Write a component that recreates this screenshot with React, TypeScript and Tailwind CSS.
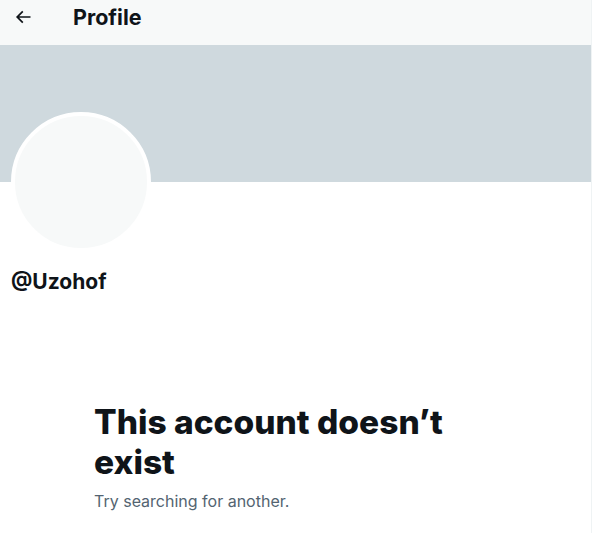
import React from "react";

const BackArrow = () => (
  <svg viewBox="0 0 24 24" className="w-5 h-5 text-[#0f1419]" fill="currentColor">
    <path d="M7.414 13l5.043 5.04-1.414 1.42L3.586 12l7.457-7.46 1.414 1.42L7.414 11H21v2H7.414z" />
  </svg>
);

const App = () => {
  return (
    <div
      className="w-[592px] min-h-[533px] bg-white border-r border-[#eff3f4] text-[#0f1419]"
      style={{ fontFamily: 'Inter, "Noto Sans", Roboto, sans-serif' }}
    >
      <div className="h-[45px] bg-[#f7f9f9] flex items-start pt-[5px] px-3">
        <div className="w-[21px] h-6 flex items-center justify-start ml-[1px]">
          <BackArrow />
        </div>
        <h2 className="ml-[39px] text-[21.5px] font-bold leading-6">Profile</h2>
      </div>

      <div className="h-[137px] bg-[#cfd9de]" />

      <div className="px-[11px]">
        <div className="-mt-[70px] w-[140px] h-[140px] rounded-full bg-[#f7f9f9] border-4 border-white" />
        <div className="mt-[18px] text-[21px] font-bold leading-6">@Uzohof</div>
      </div>

      <div className="pl-[94px] pr-8 mt-[108px]">
        <h1 className="text-[33.5px] font-extrabold leading-[40px]">
          This account doesn’t
          <br />
          exist
        </h1>
        <p className="mt-[9px] text-[16px] leading-5 text-[#536471]">Try searching for another.</p>
      </div>
    </div>
  );
};

export default App;
